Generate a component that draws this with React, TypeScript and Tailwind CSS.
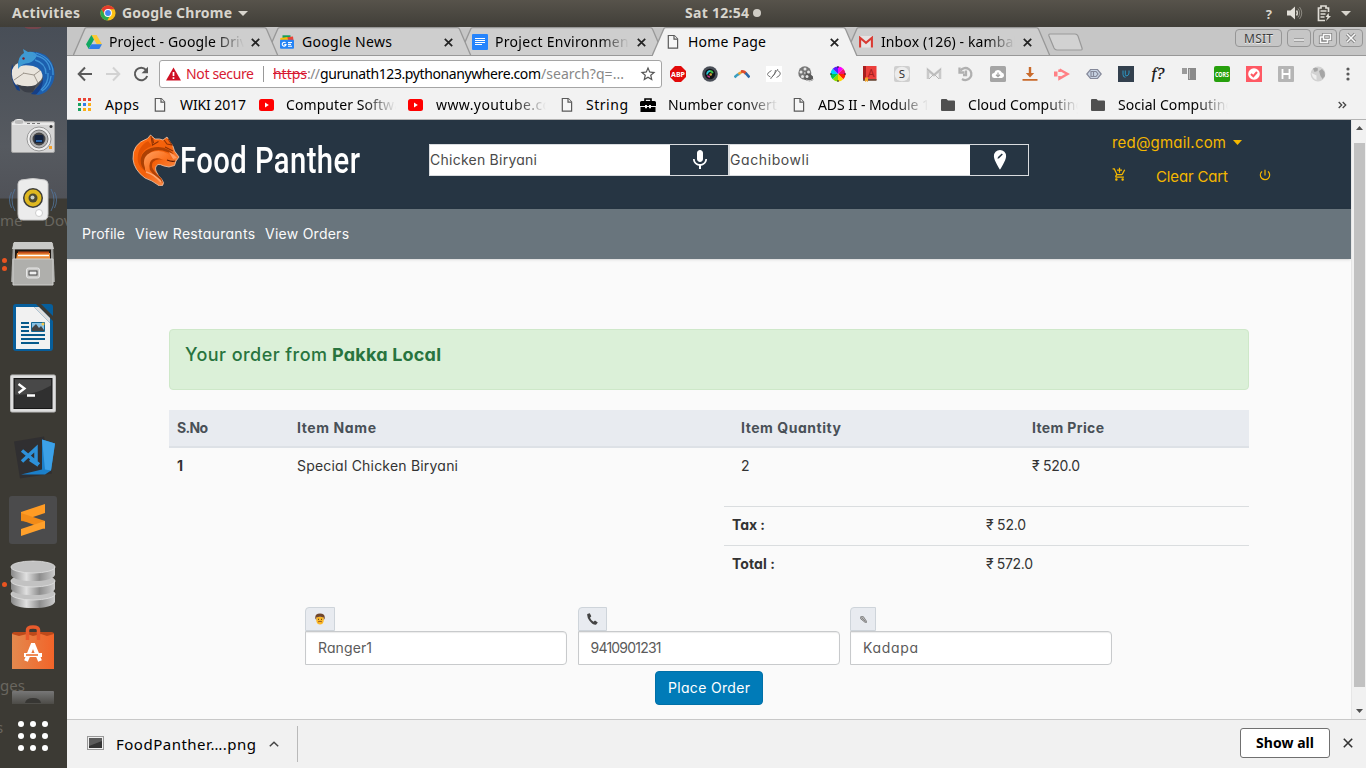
import { useLayoutEffect, useRef, useState, type ReactNode } from "react";
import { MdAddShoppingCart, MdMic, MdPowerSettingsNew, MdStarBorder } from "react-icons/md";

/** Text set to an exact advance width by evenly adjusting its letter spacing. */
function Fit({ w, className = "", children }: { w: number; className?: string; children: string }) {
  const ref = useRef<HTMLSpanElement>(null);
  const [gap, setGap] = useState(0);
  useLayoutEffect(() => {
    const el = ref.current;
    if (!el) return;
    el.style.letterSpacing = "0px";
    const natural = el.getBoundingClientRect().width;
    const next = (w - natural) / Math.max(1, children.length - 1);
    el.style.letterSpacing = `${next}px`;
    setGap(next);
  }, [w, children]);
  return (
    <span ref={ref} className={`inline-block whitespace-pre ${className}`} style={{ letterSpacing: gap, marginRight: -gap }}>
      {children}
    </span>
  );
}

function PageIcon() {
  return (
    <svg width="12" height="16" viewBox="0 0 12 16" className="shrink-0" fill="#f6f6f6" stroke="#5a5a5a" strokeWidth="1.2">
      <path d="M1.3 1.5h6l3.3 3.4v9.3H1.3z" />
      <path d="M7 1.6v3.6h3.6" />
    </svg>
  );
}

function ChromeIcon() {
  return (
    <svg width="16" height="16" viewBox="0 0 16 16">
      <circle cx="8" cy="8" r="7.6" fill="#fbc116" />
      <path d="M1.4 4.2A7.6 7.6 0 0 1 14.6 4.3H8L5 9.7z" fill="#e33b2e" />
      <path d="M1.4 4.2 5 10.2l4.6 1.1-2.3 4.3A7.6 7.6 0 0 1 1.4 4.2z" fill="#2da94f" />
      <circle cx="8" cy="8" r="3.9" fill="#fff" />
      <circle cx="8" cy="8" r="2.9" fill="#4285f4" />
    </svg>
  );
}

function DriveIcon() {
  return (
    <svg width="16" height="14" viewBox="0 0 16 14">
      <path d="M5.4 0h5.2L16 9.2h-5.2z" fill="#fcc934" />
      <path d="M5.4 0 8 4.5 2.7 14 0 9.3z" fill="#11a861" />
      <path d="M5.3 9.2H16L13.3 14H2.7z" fill="#2f7de9" />
    </svg>
  );
}

function NewsIcon() {
  return (
    <svg width="14" height="14" viewBox="0 0 14 14">
      <path d="M2.5 .3h8V6h-8z" fill="#159e58" />
      <path d="M7 2.2l6-.8.7 5H7z" fill="#ea4335" />
      <path d="M.3 3l7-1 1 4H.3z" fill="#fbbc04" />
      <rect y="4.8" width="14" height="9" rx="1" fill="#2684f5" />
      <path d="M5.6 8a1.9 1.9 0 1 0 .4 1.6H4.3M8 7.5h4M8 9.4h3M8 11.2h4" stroke="#fff" strokeWidth="1.1" fill="none" />
    </svg>
  );
}

function DocsIcon() {
  return (
    <svg width="16" height="16" viewBox="0 0 16 16">
      <rect width="16" height="16" rx="1" fill="#2684fc" />
      <path d="M3 4.5h10M3 6.5h10M3 8.500h10M3 10.500h7" stroke="#fff" strokeWidth="1" />
    </svg>
  );
}

function GmailIcon() {
  return (
    <svg width="14" height="12" viewBox="0 0 14 12">
      <rect width="14" height="11.5" rx="1" fill="#e6e3e3" />
      <path d="M1.1 11.5V1.8L7 6.8l5.9-5v9.7" fill="none" stroke="#d93a32" strokeWidth="2.1" />
    </svg>
  );
}

const tabs = [
  { title: "Project - Google Driv", w: 138, clip: 135, fade: true, icon: <DriveIcon />, z: "z-40" },
  { title: "Google News", w: 90, clip: 135, fade: false, icon: <NewsIcon />, z: "z-30" },
  { title: "Project Environment", w: 139, clip: 134, fade: true, icon: <DocsIcon />, z: "z-20" },
  { title: "Home Page", w: 78, clip: 135, fade: false, icon: <PageIcon />, z: "z-50", active: true },
  { title: "Inbox (126) - kambal", w: 136, clip: 134, fade: true, icon: <GmailIcon />, z: "z-10" },
];

function TabStrip() {
  return (
    <div className="relative flex h-[29px] border-b border-[#989898] bg-[#c6c6c6] pl-1.5">
      {tabs.map((t) => (
        <div key={t.title} className={`relative flex h-[29px] w-[193px] shrink-0 items-center pl-[13px] ${t.z}`}>
          <svg className="absolute top-0 left-0" width="206" height="29" viewBox="0 0 206 29">
            <path d="M0 29 L11.500 2.500 Q12 .7 14 .7 H191 Q193 .7 193.700 2.500 L205 29" fill={t.active ? "#f2f2f2" : "#cecece"} stroke="#989898" strokeWidth="1.3" />
            {!t.active && <path d="M0 28.500H206" stroke="#989898" />}
          </svg>
          <span className="relative flex w-[23px] justify-center pr-2">
            <span className="flex w-4 shrink-0 justify-center">{t.icon}</span>
          </span>
          <span
            className={`relative h-6 overflow-hidden text-sm leading-6 ${t.fade ? "[mask-image:linear-gradient(to_right,#000_78%,transparent)]" : ""}`}
            style={{ width: t.clip }}
          >
            <Fit w={t.w}>{t.title}</Fit>
          </span>
          <svg className="absolute top-[11px] left-[178px]" width="9" height="9" viewBox="0 0 9 9" stroke="#222" strokeWidth="1.7">
            <path d="M.8.8l7.4 7.4M8.2.8.8 8.2" />
          </svg>
        </div>
      ))}
      <svg className="mt-[6px] ml-[9px]" width="38" height="19" viewBox="0 0 38 19">
        <path d="M3 1h25q2 0 3 2l4 12q.6 2-1 2H10q-2 0-3-2L2 3q-.7-2 1-2z" fill="#d2d2d2" stroke="#999" strokeWidth="1.2" />
      </svg>
      <div className="mt-0.5 mr-[3px] ml-auto flex gap-0.5">
        <div className="mr-[3px] flex h-[18px] w-[47px] items-center justify-center rounded-sm border border-[#969696] pt-px text-xs text-[#3d3d3d] [text-shadow:0_1px_0_#eee]">
          <Fit w={29}>MSIT</Fit>
        </div>
        {["M7 11h10", "M10.500 5.500h7v5h-7zM10 8H7.500v5.500h7v-2.500", "M8 5l8 8M16 5l-8 8"].map((d) => (
          <div key={d} className="flex h-[18px] w-6 items-center justify-center rounded-sm border border-[#969696]">
            <svg width="24" height="18" viewBox="0 0 24 18" fill="none" className="shrink-0">
              <path d={d} stroke="#858585" strokeWidth="3.2" />
              <path d={d} stroke="#fafafa" strokeWidth="1.5" />
            </svg>
          </div>
        ))}
      </div>
    </div>
  );
}

const extensions: ReactNode[] = [
  <g key="abp">
    <path d="M5 0h6l5 5v6l-5 5H5l-5-5V5z" fill="#e20a0a" />
    <text x="8" y="10.8" textAnchor="middle" fontSize="7.500" textLength="14" lengthAdjust="spacingAndGlyphs" fontWeight="bold" fill="#fff">ABP</text>
  </g>,
  <g key="lens">
    <circle cx="8" cy="8" r="7.8" fill="#4a4f58" />
    <circle cx="8" cy="8" r="5.2" fill="#101217" />
    <path d="M5.2 8.5A3 3 0 0 1 8 5" stroke="#29c7d6" strokeWidth="1.8" fill="none" />
    <path d="M8 5a3 3 0 0 1 2.800 2.200" stroke="#41c34c" strokeWidth="1.8" fill="none" />
    <path d="M5.4 9.500a3 3 0 0 0 2.600 1.500" stroke="#d13a8e" strokeWidth="1.4" fill="none" />
    <circle cx="8.700" cy="8.500" r="1.300" fill="#d8a73a" />
  </g>,
  <g key="arc" fill="none" strokeWidth="2.600">
    <path d="M.5 11.500Q3 8.500 6 7.500" stroke="#3b9fc0" />
    <path d="M4.500 8.200Q6.500 6 8.500 6" stroke="#f0a030" />
    <path d="M7 5.500Q10.500 5 12 8" stroke="#dd4b2b" />
    <path d="M11.500 6.800 15.500 11.500" stroke="#2b68a8" />
  </g>,
  <g key="code">
    <rect width="16" height="16" fill="#fff" />
    <path d="M5.500 4.500Q1 7 1.500 8.500T4.500 11M11.500 4.500Q14.800 6 14.300 8T10.500 11.500M4.500 13 12 3M6 11Q9.500 9 9.500 4" stroke="#666" strokeWidth=".9" fill="none" />
  </g>,
  <g key="reel">
    <ellipse cx="6.800" cy="7" rx="6.500" ry="6.800" fill="#777" />
    <path d="M9 5l6 5.500V14q-4 3-9-1z" fill="#5a5a5a" />
    <path d="M8 14q4 2 8-1" stroke="#ccc" fill="none" />
    <g fill="#e5e5e5">
      <circle cx="7" cy="3" r="1.5" /><circle cx="3" cy="6" r="1.5" /><circle cx="10.5" cy="6" r="1.5" /><circle cx="4.500" cy="10.500" r="1.5" /><circle cx="9" cy="10.500" r="1.500" /><circle cx="6.800" cy="7" r=".8" />
    </g>
  </g>,
  <g key="wheel">
    <path d="M8 8V.5a7.500 7.500 0 0 1 5.300 2.200z" fill="#f0f" />
    <path d="M8 8l5.300-5.300A7.500 7.500 0 0 1 15.500 8z" fill="#f0146e" />
    <path d="M8 8h7.500a7.500 7.500 0 0 1-2.200 5.300z" fill="#ff2200" />
    <path d="M8 8l5.300 5.300A7.500 7.500 0 0 1 8 15.500z" fill="#ffd500" />
    <path d="M8 8v7.500a7.500 7.500 0 0 1-5.300-2.200z" fill="#8be000" />
    <path d="M8 8l-5.300 5.300A7.500 7.500 0 0 1 .5 8z" fill="#00c853" />
    <path d="M8 8H.5a7.500 7.500 0 0 1 2.200-5.300z" fill="#00cfff" />
    <path d="M8 8L2.700 2.700A7.500 7.500 0 0 1 8 .5z" fill="#5a1bff" />
    <path d="M8 0v2M8 14v2M0 8h2M14 8h2" stroke="#222" />
  </g>,
  <g key="dict">
    <path d="M1 0h13.5v14H1z" fill="#ec3f3c" />
    <path d="M1 0h3v14H1z" fill="#a81e1e" />
    <path d="M1 13h13.500v1.800H1z" fill="#6b4a38" />
    <path d="M3 11.500h3V16l-1.500-1L3 16z" fill="#f2a428" />
    <text x="9.200" y="11" textAnchor="middle" fontSize="10.500" fill="#a81e1e">A</text>
  </g>,
  <g key="s">
    <rect width="16" height="16" rx="2" fill="#cfcfcf" />
    <circle cx="8" cy="8" r="7.300" fill="#ececec" />
    <text x="8" y="12" textAnchor="middle" fontSize="11.500" fill="#333">S</text>
  </g>,
  <g key="mail" fill="none">
    <path d="M2 13V4l6 5 6-5v9" stroke="#c9c9c9" strokeWidth="2.6" />
    <path d="M1 3l7 6 7-6M3 13l4-4M13 13 9 9" stroke="#b5b5b5" />
  </g>,
  <g key="history" fill="none" stroke="#b0b0b0" strokeWidth="2.3">
    <path d="M2.500 4.500A6 6 0 1 1 4 13M8 4.500V9H5" />
    <path d="M1.500 1.500v5h5" />
  </g>,
  <g key="cloud">
    <rect width="16" height="16" rx="1.5" fill="#a5a5a5" />
    <path d="M4.500 12a2.500 2.500 0 0 1-.3-5 4 4 0 0 1 7.600-.5 2.800 2.800 0 0 1 0 5.500z" fill="#fff" />
    <path d="M8 6.500v4M6 8.700l2 2 2-2" stroke="#a5a5a5" fill="none" strokeWidth="1.300" />
  </g>,
  <g key="dl" fill="#c96a2b">
    <path d="M6.800 1h2.400v6h3L8 11.500 3.800 7h3zM.5 13h15v1.800H.5z" />
  </g>,
  <g key="tri" fill="none" stroke="#ff8085" strokeWidth="2.500">
    <path d="M5.500 3.500 13.500 8 5.500 12.500V10M5.500 6V3.500" />
    <path d="M0 5.500h3.500v5H0z" fill="#ff8085" stroke="none" />
  </g>,
  <g key="hex" fill="none" stroke="#85899a" strokeWidth="1.200">
    <path d="M4.500 3.500h7L15.200 8l-3.700 4.500h-7L.8 8z" fill="#c8d4e4" />
    <path d="M5 5.500h5L12 8l-2 2.500H5zM7.500 6v4" />
  </g>,
  <g key="u">
    <rect width="16" height="16" fill="#33404e" />
    <path d="M5 4.500v4q0 2.800 2.500 2.800M7.300 4.500v3.800q0 2 1.700 1.500t2-2.800V4.500" stroke="#2b9fd0" strokeWidth=".9" fill="none" />
  </g>,
  <text key="f" x="8" y="13" textAnchor="middle" fontSize="17" fill="#111" stroke="#111" strokeWidth=".3" className="font-['Liberation_Serif',serif] italic">f?</text>,
  <g key="cols">
    <path d="M0 2h5v6H0z" fill="#9a9a9a" />
    <path d="M6 2h8v12H6z" fill="#8a8a8a" />
    <path d="M7.500 3v10" stroke="#bbb" />
  </g>,
  <g key="cors">
    <rect width="16" height="16" rx="2" fill="#27a00d" />
    <text x="8" y="10.800" textAnchor="middle" fontSize="7.500" textLength="14" lengthAdjust="spacingAndGlyphs" fontWeight="bold" fill="#fff">CORS</text>
  </g>,
  <g key="check">
    <rect width="16" height="16" fill="#ff5964" />
    <circle cx="8" cy="8" r="5.800" fill="#fff" />
    <path d="M5 8l2.300 2.200L11 6" stroke="#ff5964" strokeWidth="2" fill="none" />
  </g>,
  <g key="h">
    <rect width="16" height="16" rx="1" fill="#b5b5b5" />
    <path d="M4.500 3v10M11.500 3v10M4.500 8h7" stroke="#fff" strokeWidth="1.8" />
  </g>,
  <g key="globe">
    <circle cx="8" cy="8" r="7.4" fill="#d2d2d2" />
    <path d="M3 2.500Q6 1 8 2.500L7.500 5 4.500 6zM9 5l3-2 2.500 3 .5 4-2.500 3-2-3z" fill="#a5a5a5" />
    <path d="M1.500 7l5 2.500L6.500 14Q2 12 1.500 7z" fill="#efefef" />
  </g>,
];

function Toolbar() {
  return (
    <div className="flex h-9 items-center bg-[#f2f2f2] pl-2.5">
      <svg width="16" height="16" viewBox="0 0 16 16" fill="none" stroke="#5a5a5a" strokeWidth="2">
        <path d="M15 8H2M8 1.500 1.700 8 8 14.500" />
      </svg>
      <svg className="ml-3" width="16" height="16" viewBox="0 0 16 16" fill="none" stroke="#d2d2d2" strokeWidth="2">
        <path d="M1 8h13M8 1.500 14.300 8 8 14.500" />
      </svg>
      <svg className="ml-3" width="16" height="16" viewBox="0 0 16 16">
        <path d="M13 3.800A6.300 6.300 0 1 0 14.200 10" fill="none" stroke="#5a5a5a" strokeWidth="2" />
        <path d="M15 .8v6.500H8.600z" fill="#5a5a5a" />
      </svg>
      <div className="ml-[10px] flex h-7 w-[503px] shrink-0 items-center rounded-[3px] border border-[#a5a5a5] bg-white pl-1.5 text-sm">
        <svg width="15" height="14" viewBox="0 0 15 14">
          <path d="M7.500.5 15 13.500H0z" fill="#cf1124" />
          <path d="M7.500 5v4M7.500 10.200v1.800" stroke="#fff" strokeWidth="1.7" />
        </svg>
        <Fit w={68} className="ml-[5px] text-[#d71a32]">Not secure</Fit>
        <span className="mx-[9px] h-4 w-px bg-[#999]" />
        <Fit w={34} className="text-[#d71a32] line-through">https</Fit>
        <Fit w={13} className="text-[#888]">://</Fit>
        <Fit w={221} className="text-black">gurunath123.pythonanywhere.com</Fit>
        <Fit w={83} className="text-[#888]">/search?q=...</Fit>
        <MdStarBorder className="mr-1 ml-auto size-[18px] text-[#555]" />
      </div>
      <div className="ml-2 flex gap-4">
        {extensions.map((icon, i) => (
          <svg key={i} width="16" height="16" viewBox="0 0 16 16" className="shrink-0">{icon}</svg>
        ))}
        <svg className="ml-1" width="4" height="16" viewBox="0 0 4 16" fill="#5a5a5a">
          <circle cx="2" cy="3" r="1.600" /><circle cx="2" cy="8" r="1.600" /><circle cx="2" cy="13" r="1.600" />
        </svg>
      </div>
    </div>
  );
}

function YouTube() {
  return (
    <svg width="15" height="12" viewBox="0 0 15 12">
      <rect width="15" height="12" rx="2.5" fill="#f00" />
      <path d="M6 3.500v5L9.800 6z" fill="#fff" />
    </svg>
  );
}

function Folder() {
  return (
    <svg width="14" height="12" viewBox="0 0 14 12" fill="#505050">
      <path d="M1 0h4.500L7 1.600h6q1 0 1 1V11q0 1-1 1H1q-1 0-1-1V1q0-1 1-1z" />
    </svg>
  );
}

function Briefcase() {
  return (
    <svg width="16" height="14" viewBox="0 0 16 14">
      <path d="M5 3V1h6v2" fill="none" stroke="#000" strokeWidth="1.6" />
      <path d="M1.500 3h13Q16 3 16 4.500V8h-5V7H9v1H7V7H5v1H0V4.500Q0 3 1.500 3zM.5 9H5v1.300h2V9h2v1.300h2V9h4.500v5H.5z" />
    </svg>
  );
}

const bookmarks = [
  { icon: <PageIcon />, cell: "w-[26px]", title: "WIKI 2017", w: 66, box: "w-[79px]", fade: false },
  { icon: <YouTube />, cell: "w-[27px]", title: "Computer Softwa", w: 116, box: "w-[122px]", fade: true },
  { icon: <YouTube />, cell: "w-[28px]", title: "www.youtube.co", w: 115, box: "w-[125px]", fade: true },
  { icon: <PageIcon />, cell: "w-[25px]", title: "String", w: 42, box: "w-[54px]", fade: false },
  { icon: <Briefcase />, cell: "w-[28px]", title: "Number convert", w: 109, box: "w-[125px]", fade: true },
  { icon: <PageIcon />, cell: "w-[25px]", title: "ADS II - Module 1", w: 112, box: "w-[123px]", fade: true },
  { icon: <Folder />, cell: "w-[27px]", title: "Cloud Computing", w: 116, box: "w-[123px]", fade: true },
  { icon: <Folder />, cell: "w-[27px]", title: "Social Computing", w: 116, box: "w-[120px]", fade: true },
];

function Bookmarks() {
  const colors = ["bg-[#ea4335]", "bg-[#ea4335]", "bg-[#ea4335]", "bg-[#1aa260]", "bg-[#2f7de9]", "bg-[#fbae17]", "bg-[#1aa260]", "bg-[#fbae17]", "bg-[#fbae17]"];
  return (
    <div className="flex h-7 items-center border-b border-[#b4b4b4] bg-[#f2f2f2] pb-0.5 pl-[11px] text-sm">
      <div className="grid shrink-0 grid-cols-3 gap-[2px]">
        {colors.map((c, i) => <span key={i} className={`size-[3px] ${c}`} />)}
      </div>
      <div className="ml-[14px] w-[49px] shrink-0"><Fit w={34}>Apps</Fit></div>
      {bookmarks.map((b) => (
        <div key={b.title} className="flex shrink-0 items-center">
          <span className={`${b.cell} flex shrink-0`}>{b.icon}</span>
          <span className={`${b.box} shrink-0`}>
            <span className={`block h-6 leading-6 ${b.fade ? "w-[110px] overflow-hidden [mask-image:linear-gradient(to_right,#000_70%,transparent)]" : ""}`}>
              <Fit w={b.w}>{b.title}</Fit>
            </span>
          </span>
        </div>
      ))}
      <svg className="mr-[19px] ml-auto" width="9" height="8" viewBox="0 0 9 8" fill="none" stroke="#444" strokeWidth="1.300">
        <path d="M.7 1l3 3-3 3M4.700 1l3 3-3 3" />
      </svg>
    </div>
  );
}

function PantherLogo() {
  return (
    <svg width="48" height="52" viewBox="0 0 48 52">
      <defs>
        <linearGradient id="fur" x1="0" y1="0" x2="1" y2="1">
          <stop offset="0" stopColor="#ff6a10" /><stop offset=".5" stopColor="#f4600a" /><stop offset="1" stopColor="#ff9f63" />
        </linearGradient>
        <linearGradient id="neck" x1="0" y1="0" x2="1" y2="1">
          <stop offset="0" stopColor="#ffa061" /><stop offset=".5" stopColor="#fb7220" /><stop offset="1" stopColor="#d94b02" />
        </linearGradient>
      </defs>
      <path d="M18.500 1l4.500 4q5-.5 8 1l4-3 3 5q3.500 3.500 4.500 9l4.500 6-3 4-1.500 4.500-5.500 1.500-5-1q-4-2-6-1.500-3.500 2-2 6.500 2 5 5.500 8 3.500 4 1 6.500l-3 .5q-8-6-14.500-8Q2 36 1 25 0 10 15.500 4.500z" fill="url(#fur)" stroke="#eec9b0" strokeWidth=".8" />
      <path d="M6 28Q4 14 16 7l4 5q-9 3-11 10-1 9 4 15-5-3-7-9z" fill="#e25204" />
      <path d="M9 30q-2-12 10-16 10-3 18 2l5 4-7-2q-9-4-16 0-8 5-4 17l3 5q-7-3-9-10z" fill="#ad4003" />
      <path d="M13 34Q9 22 20 18q9-3 16 2l6 5-9 1q-9-4-14 2-4 6 2 14-6-2-8-6z" fill="url(#neck)" />
      <path d="M31 26q-6-2-10 2-3 4 2 10l6 6q2 3 1.500 5.500l-2-4Q22 42 18 36q-2-8 3-11 5-2 10 1z" fill="#b34205" />
      <path d="M14 38q8 2 15 10" fill="none" stroke="#ffa873" strokeWidth="1.400" />
      <path d="M19 2l1.500 9 6-3.500M20.500 4l1 5M32 6l3 4 5 1-4-6M33 13l8 4" fill="none" stroke="#8f3204" strokeWidth="1.100" />
      <path d="M37 18l5 3 3 3-4 1z" fill="#ff9d64" />
      <path d="M35 26q5 2 8 1" stroke="#5c1900" strokeWidth="1.300" fill="none" />
    </svg>
  );
}

function SiteHeader() {
  return (
    <header className="flex h-[89px] shrink-0 bg-[#263543]">
      <div className="flex w-[362px] shrink-0 pt-[14px] pl-[65px]">
        <PantherLogo />
        <div className="mt-0.5 w-44">
          <span className="block origin-left scale-x-[.79] font-[Roboto,sans-serif] text-[37px] leading-[50px] font-medium tracking-[0.55px] whitespace-nowrap text-white">
            Food Panther
          </span>
        </div>
      </div>
      <div className="mt-6 flex h-8 w-[600px] shrink-0 border border-[#d9dcdf] text-[#4a4a4a]">
        <div className="flex w-60 items-center bg-white"><Fit w={107}>Chicken Biryani</Fit></div>
        <div className="flex w-[58px] items-center justify-center text-white"><MdMic className="ml-0.5 size-6" /></div>
        <div className="flex w-[242px] items-center border-l-2 border-[#d9dcdf] bg-white"><Fit w={79}>Gachibowli</Fit></div>
        <div className="flex flex-1 items-center justify-center">
          <svg className="ml-0.5" width="14" height="22" viewBox="0 0 14 22">
            <path d="M7 1a6.1 6.1 0 0 0-6.1 6.300C.9 11.500 7 20.800 7 20.800s6.100-9.300 6.100-13.500A6.100 6.100 0 0 0 7 1z" fill="#fff" />
            <path d="M4.500 9.800 5 8l3.800-3.600 1 1-3.700 3.800z" fill="#263543" />
          </svg>
        </div>
      </div>
      <div className="ml-[83px] pt-[14px] text-[#f5b800]">
        <div className="flex h-[18px] items-center text-[15px]">
          <Fit w={114}>red@gmail.com</Fit>
          <svg className="mb-0.5 ml-[7px]" width="9" height="5" viewBox="0 0 9 5" fill="currentColor"><path d="M0 0h9L4.500 5z" /></svg>
        </div>
        <div className="mt-[15px] flex h-5 items-center">
          <MdAddShoppingCart className="mb-1.5 size-[15px]" />
          <Fit w={72} className="ml-[29px] text-[15px]">Clear Cart</Fit>
          <MdPowerSettingsNew className="mb-1 ml-[30px] size-[14px]" />
        </div>
      </div>
    </header>
  );
}

function Field({ icon, value, w, width }: { icon: ReactNode; value: string; w: number; width: string }) {
  return (
    <div>
      <div className={`${width} flex h-6 items-center justify-center rounded-tl-sm border border-[#ced4da] bg-[#e8ebf0]`}>{icon}</div>
      <div className="flex h-[34px] items-center rounded-r border border-[#c8cacc] bg-white pl-3 shadow-[inset_0_1px_1px_rgba(0,0,0,.08)]">
        <Fit w={w}>{value}</Fit>
      </div>
    </div>
  );
}

function OrderPage() {
  return (
    <main className="flex w-[1284px] shrink-0 flex-col overflow-hidden bg-[#fafafa] font-[Inter,sans-serif] text-sm text-[#333] [font-feature-settings:'cv11']">
      <SiteHeader />
      <nav className="flex h-[50px] shrink-0 items-center gap-[10px] bg-[#69757d] pl-[15px] text-[#fafafa] shadow">
        <Fit w={43}>Profile</Fit>
        <Fit w={120}>View Restaurants</Fit>
        <Fit w={84}>View Orders</Fit>
      </nav>
      <div className="ml-[102px] w-[1080px] pt-[70px]">
        <div className="h-[61px] rounded border border-[#cee8c9] bg-[#dbf0d8] pt-[11px] pl-[15px] text-lg leading-7 text-[#28743e]">
          <Fit w={142} className="font-medium">Your order from</Fit>
          <Fit w={109} className="ml-[5px] font-bold">Pakka Local</Fit>
        </div>
        <div className="mt-5 grid h-[38px] grid-cols-[120px_444px_291px_1fr] items-center border-b-2 border-[#dde1e6] bg-[#e8ebf0] font-bold text-[#495057] *:pl-2">
          <div><Fit w={31}>S.No</Fit></div>
          <div><Fit w={79}>Item Name</Fit></div>
          <div><Fit w={100}>Item Quantity</Fit></div>
          <div><Fit w={72}>Item Price</Fit></div>
        </div>
        <div className="grid h-[37px] grid-cols-[120px_444px_291px_1fr] items-center pb-px *:pl-2">
          <div className="font-bold">1</div>
          <div><Fit w={161}>Special Chicken Biryani</Fit></div>
          <div>2</div>
          <div><Fit w={48}>₹ 520.0</Fit></div>
        </div>
        <div className="mt-[21px] ml-[555px]">
          <div className="grid h-[39px] grid-cols-[254px_1fr] items-center border-t border-[#dadddf] pb-0.5 *:pl-2">
            <div className="font-bold"><Fit w={33}>Tax :</Fit></div>
            <div><Fit w={40}>₹ 52.0</Fit></div>
          </div>
          <div className="grid h-[39px] grid-cols-[254px_1fr] items-center border-t border-[#dadddf] pb-0.5 *:pl-2">
            <div className="font-bold"><Fit w={43}>Total :</Fit></div>
            <div><Fit w={47}>₹ 572.0</Fit></div>
          </div>
        </div>
        <div className="mt-[23px] ml-[136px] grid grid-cols-[262px_262px_262px] gap-x-[10.5px] text-[#5b5b5b]">
          <Field width="w-[30px]" value="Ranger1" w={54} icon={
            <svg width="10" height="12" viewBox="0 0 10 12">
              <path d="M1.300 4h7.400v4q-.7 3.500-3.700 3.500T1.300 8z" fill="#fcb827" />
              <path d="M.3 5.500Q-.3.5 5 .5t4.700 5L8.800 7V4.500Q5 3 1.200 4.500V7z" fill="#70462c" />
              <path d="M3 6.300h1M6 6.300h1" stroke="#4a3520" />
              <path d="M3 8.800q2-1 4 0" stroke="#8a5526" fill="none" strokeWidth=".9" />
            </svg>} />
          <Field width="w-[29px]" value="9410901231" w={71} icon={
            <svg width="11" height="12" viewBox="0 0 11 12">
              <path d="M.3 1 2.800.2 4.300 3.200 3 4.700Q3.800 7 6.500 8.700L8 7.600l2.800 2L9 11.700Q5.500 12 2.300 7.500-.3 3.500.3 1z" fill="#444" />
            </svg>} />
          <Field width="w-[26px]" value="Kadapa" w={55} icon={
            <svg width="7" height="7" viewBox="0 0 8 8">
              <path d="M.8.8l3-.1L7.200 5.600l.2 1.800-1.800-.3L.8 3.300z" fill="#bbb" stroke="#666" strokeWidth=".8" />
              <path d="M2 2l4 4" stroke="#666" strokeWidth=".7" />
            </svg>} />
        </div>
        <button className="mt-1.5 ml-[486px] block h-[34px] w-[108px] rounded border border-[#0070a8] bg-[#007bb8] text-white">
          <Fit w={82}>Place Order</Fit>
        </button>
      </div>
    </main>
  );
}

const dockIcons: { icon: ReactNode; dots: number }[] = [
  {
    dots: 0,
    icon: (
      <g>
        <path d="M3 16Q0 30 8 42l3 1-2-10zM44 17q4 14-6 24-8 7-16 5l8-9z" fill="#163f86" />
        <path d="M3 22q3-7 9-8l20 4q4 8 0 14l-9 8-16-3Q2 31 3 22z" fill="#e9e4dc" />
        <path d="M14 25l11 2 12-9M5 32l10-7M25 27l4 8" stroke="#9d968c" fill="none" />
        <path d="M7 36q10 4 20 1l-3 7q-8 2-12-3z" fill="#3b3f48" />
        <path d="M9 15Q12 5 20 4q16-2 23 11 7 16-5 28-5 4-11 4 7-7 7-15 0-12-10-14Q12 16 9 20z" fill="#1d5fae" />
        <path d="M9 18Q9 8 15 5l-1-4 5 3q6-1 9 3-2 6-8 8-7 0-11 6z" fill="#3e9ad3" />
        <path d="M24 7q15 2 17 15M27 5q18 6 17 22M26 12q11 3 11 14M39 25q1 10-7 17M42 28q-1 10-9 15" stroke="#3f93d6" fill="none" strokeWidth="1.300" />
        <circle cx="14.500" cy="10.500" r="1.200" fill="#7b1f2a" />
      </g>
    ),
  },
  {
    dots: 0,
    icon: (
      <g>
        <rect x="2.500" y="9.500" width="43" height="31" rx="1.500" fill="#d5d5d5" stroke="#a2a2a2" />
        <path d="M3 12h42" stroke="#fff" /><ellipse cx="10" cy="10" rx="5" ry="2.500" fill="#bbb" stroke="#eee" />
        <path d="M18 11.500h15" stroke="#777" strokeDasharray="3 2" />
        <circle cx="30" cy="27" r="12" fill="#efefef" stroke="#999" />
        <circle cx="30" cy="27" r="9" fill="#b5b5b5" stroke="#777" />
        <circle cx="30" cy="27" r="6.500" fill="#444" />
        <rect x="25.500" y="23" width="9" height="8" rx="1.500" fill="#14223c" /><path d="M27 28h6v2h-6z" fill="#2b67ab" />
        <circle cx="42" cy="14.500" r="1.500" fill="#333" /><path d="M40 34h3v3h-3z" fill="#f5a22c" />
      </g>
    ),
  },
  {
    dots: 0,
    icon: (
      <g>
        <path d="M6 13q-6 11 0 22M42 13q6 11 0 22M2.500 16q-4 8 0 16M45.500 16q4 8 0 16" stroke="#51759e" fill="none" opacity=".8" />
        <path d="M12 4q12-3 24 0 3 1 3 4v30q0 6-5 6H14q-5 0-5-6V8q0-3 3-4z" fill="#ececec" stroke="#c8c8c8" />
        <circle cx="24" cy="22" r="10" fill="#3c3c39" /><circle cx="24" cy="22" r="8.500" fill="#dfb820" />
        <circle cx="24" cy="22" r="4.500" fill="#4c4a33" /><circle cx="23.500" cy="21.500" r="2" fill="#c9cfc8" />
        <circle cx="30" cy="37" r="3.500" fill="#fff" stroke="#ccc" />
      </g>
    ),
  },
  {
    dots: 2,
    icon: (
      <g>
        <path d="M4 3h40l2 39H2z" fill="#9f9f9c" />
        <path d="M5 2h38l2 7H3z" fill="#c9c9c7" />
        <path d="M6 9.500h36V24H6z" fill="#1f1813" /><path d="M8 13h33v7H7z" fill="#ee8d3a" />
        <path d="M9 12.500h31" stroke="#c24d19" strokeWidth="2" /><path d="M9 15.500h31" stroke="#fff" strokeWidth="1.400" />
        <path d="M4 19h40v26H4z" fill="#afafac" stroke="#cfcfcd" />
        <rect x="17.500" y="28" width="13" height="10" rx="2" fill="#c9c9c7" stroke="#e6e6e6" /><rect x="20" y="31" width="8" height="4" fill="#eee" stroke="#444" />
      </g>
    ),
  },
  {
    dots: 0,
    icon: (
      <g>
        <path d="M7 0h20l17 17v27q0 3-3 3H7q-3 0-3-3V3q0-3 3-3z" fill="#075e9b" /><path d="M32 0h9q3 0 3 3v9z" fill="#075e9b" />
        <path d="M7 3h18l16 16v26H7z" fill="#f1f1f1" /><path d="M25 3l16 16V14L30 3z" fill="#ddd" />
        <path d="M12 19h8M12 23h8M12 27h8M12 31h24M12 35h24M12 39h18" stroke="#075a8b" strokeWidth="2" />
        <path d="M22.500 18.500h13v9h-13z" fill="#88c1e4" stroke="#126694" /><path d="M23 27v-3l4-4 3 4 2-2 3 4v1z" fill="#444" /><circle cx="34" cy="20" r="1.500" fill="#f7c84a" />
      </g>
    ),
  },
  {
    dots: 0,
    icon: (
      <g transform="translate(0 1.500)">
        <rect x="1.500" y="5.500" width="45" height="37" rx="1.500" fill="#dedede" stroke="#bcbcbc" />
        <rect x="5" y="9" width="38" height="30" fill="#303030" stroke="#171717" /><path d="M6 10h36v6Q23 27 6 25z" fill="#585858" opacity=".6" />
        <path d="M9.500 14.500l6 4.500-6 4.500M18 26h8" fill="none" stroke="#fff" strokeWidth="2.300" />
      </g>
    ),
  },
  {
    dots: 0,
    icon: (
      <g transform="translate(0 2.500)">
        <path d="M5 7 35 2l8 37-32 5z" fill="#302f31" /><path d="m33 5 13 4-4 27-6 4H12l21-5z" fill="#1b7fc9" />
        <path d="M33 5 46 9l-4 27-6-1z" fill="#3ca1e8" />
        <path d="M13 16l17 14M13 27l14-13v15l-6-4" fill="none" stroke="#2d91da" strokeWidth="3.500" />
      </g>
    ),
  },
  {
    dots: 0,
    icon: (
      <g>
        <rect width="48" height="48" rx="3" fill="#4b4b4c" /><path d="M12 16 36 8v9l-24 8z" fill="#ff9b24" />
        <path d="M12 22l24 3v3L12 25z" fill="#e07f12" /><path d="M12 17v7l24 9v-8z" fill="#f28b18" /><path d="M12 33l24-8v7l-24 8z" fill="#ffa02b" />
      </g>
    ),
  },
  {
    dots: 1,
    icon: (
      <g>
        {[34, 21, 7].map((y) => (
          <g key={y}>
            <path d={`M2 ${y}v8q3 6 22 6t22-6v-8z`} fill="url(#metal)" />
            <ellipse cx="24" cy={y} rx="22" ry="6" fill="#c2c2c2" stroke="#e2e2e2" strokeWidth=".8" />
          </g>
        ))}
      </g>
    ),
  },
  {
    dots: 0,
    icon: (
      <g>
        <path d="M3 9 5 8h38l2 1v5H3z" fill="#bd491a" /><path d="M3 10l7 2 8-2 6 2 8-2 6 2 7-2v35H3z" fill="url(#bag)" />
        <path d="M18.500 16V6q0-3 5.500-3t5.500 3v10" fill="none" stroke="#e85b2c" strokeWidth="3.500" />
        <path d="M17 37 23.500 21h1L31 37" fill="none" stroke="#fff" strokeWidth="4" /><path d="M15 31h18" stroke="#fff" strokeWidth="4" /><path d="M17 31h12" stroke="#ed7130" strokeWidth="1.600" />
      </g>
    ),
  },
];

function Dock() {
  return (
    <aside className="relative flex h-[741px] w-[67px] shrink-0 flex-col overflow-hidden bg-[linear-gradient(#484e57_0,#565a60_120px,#505258_171px,#3c3a34_172px)] pt-[13px] text-[15px] text-[#69665f]">
      <span className="absolute -top-[10px] left-[23px] h-3 w-5 rounded-full bg-[#75454c]" />
      <span className="absolute top-[182px] left-0">me</span>
      <span className="absolute top-[182px] left-11">Dov</span>
      <span className="absolute top-[647px] left-0">ges</span>
      <span className="absolute top-[689px] -left-1">s</span>
      <svg width="0" height="0" className="absolute">
        <defs>
          <linearGradient id="metal"><stop offset="0" stopColor="#888" /><stop offset=".35" stopColor="#e0e0e0" /><stop offset=".65" stopColor="#8d8d8d" /><stop offset="1" stopColor="#ccc" /></linearGradient>
          <linearGradient id="bag" x2="1"><stop offset="0" stopColor="#e3894e" /><stop offset="1" stopColor="#f26429" /></linearGradient>
          <linearGradient id="fade" x2="0" y2="1"><stop offset="0" stopColor="#777" /><stop offset="1" stopColor="#3c3a34" /></linearGradient>
        </defs>
      </svg>
      {dockIcons.map(({ icon, dots }, i) => (
        <div key={i} className="relative flex h-16 shrink-0 items-center pl-[9px]">
          <span className="absolute left-[2px] flex flex-col gap-[3px]">
            {Array.from({ length: dots }, (_, d) => <span key={d} className="size-[5px] rounded-full bg-[#e95420]" />)}
          </span>
          <svg width="48" height="48" viewBox="0 0 48 48">{icon}</svg>
        </div>
      ))}
      <svg className="relative mt-[11px] ml-3 shrink-0" width="42" height="13" viewBox="0 0 42 13">
        <rect width="42" height="18" rx="1" fill="url(#fade)" /><path d="M13 12q1-5 8-5t8 5z" fill="#373633" />
      </svg>
      <div className="mt-[17px] ml-[18px] grid grid-cols-3 gap-1.5 self-start">
        {Array.from({ length: 9 }, (_, i) => <span key={i} className="size-1.5 rounded-full bg-white" />)}
      </div>
    </aside>
  );
}

function Scrollbar() {
  return (
    <div className="flex w-[15px] flex-col items-center border-l border-[#e6e6e6] bg-[#f1f1f1]">
      <svg width="15" height="23" viewBox="0 0 15 23"><path d="M4 10h7L7.500 6z" fill="#505050" /></svg>
      <div className="h-[544px] w-[11px] bg-[#c1c1c1]" />
      <svg className="mt-auto" width="15" height="18" viewBox="0 0 15 18"><path d="M4 8h7l-3.500 4z" fill="#505050" /></svg>
    </div>
  );
}

function Downloads() {
  return (
    <footer className="flex h-[49px] items-center border-t border-[#c8c8c8] bg-[#f1f1f1] pl-5">
      <svg className="mb-0.5" width="17" height="14" viewBox="0 0 17 14">
        <rect x=".5" y=".5" width="16" height="13" fill="#eee" stroke="#999" /><path d="M2 2h13v10H2z" fill="#333" /><path d="M2 2h13v3L2 10z" fill="#777" opacity=".6" />
      </svg>
      <Fit w={140} className="mt-px ml-3 text-[15px]">FoodPanther….png</Fit>
      <svg className="ml-[13px]" width="10" height="6" viewBox="0 0 10 6" fill="none" stroke="#444" strokeWidth="1.500"><path d="m.8 5.300 4.200-4 4.200 4" /></svg>
      <span className="ml-[18px] h-9 w-px bg-[#b9b9b9]" />
      <div className="mr-[13px] mb-0.5 ml-auto flex h-[30px] w-[90px] items-center justify-center rounded-[3px] border border-[#707070] bg-white text-sm font-bold">
        <Fit w={58}>Show all</Fit>
      </div>
      <svg className="mr-[13px] mb-0.5" width="10" height="10" viewBox="0 0 10 10" stroke="#333" strokeWidth="1.600"><path d="m.8.800 8.400 8.400M9.200.800.8 9.200" /></svg>
    </footer>
  );
}

export default function App() {
  return (
    <div className="h-[768px] w-[1366px] overflow-hidden bg-[#f2f2f2] font-['Noto_Sans',sans-serif] text-black">
      <div className="grid h-[27px] grid-cols-3 items-center bg-[linear-gradient(#57534b,#403e38)] pb-px text-sm font-bold text-[#d8d5cd]">
        <div className="flex items-center pl-3">
          <Fit w={68}>Activities</Fit>
          <span className="mr-1.5 ml-5"><ChromeIcon /></span>
          <Fit w={110}>Google Chrome</Fit>
          <svg className="ml-1.5" width="10" height="5" viewBox="0 0 10 5" fill="currentColor"><path d="M0 0h10L5 5z" /></svg>
        </div>
        <div className="flex items-center justify-center pl-20">
          <Fit w={64}>Sat 12:54</Fit>
          <span className="ml-1 size-2 rounded-full bg-[#d0cdc6]" />
        </div>
        <div className="flex items-center justify-end pr-[15px]">
          <span className="mt-0.5 mr-[14px] text-[13px]">?</span>
          <svg width="17" height="16" viewBox="0 0 16 16" fill="none" stroke="#d5d2ca" className="mr-0.5">
            <path d="M.5 5.500H4l4.500-4v13L4 10.500H.500z" fill="#e3e0d9" stroke="none" /><path d="M10 5.500q1.800 2.500 0 5" strokeWidth="1.500" />
            <path d="M11.500 3.500q3.300 4.500 0 9M13 2q4.500 6 0 12" stroke="#8e8b83" />
          </svg>
          <svg className="ml-3" width="14" height="17" viewBox="0 0 14 17" fill="none" stroke="#e0ddd6" strokeWidth="1.700">
            <path d="M8 15.500H1.500V3H4V1h5v2h2.500v4M3.500 6h6M3.500 9h5M3.500 12h4" /><path d="m11.500 8-3 4h2L9 16l5-5h-2z" fill="#e0ddd6" stroke="none" />
          </svg>
          <svg className="ml-[10px]" width="10" height="5" viewBox="0 0 10 5" fill="currentColor"><path d="M0 0h10L5 5z" /></svg>
        </div>
      </div>
      <div className="flex">
        <Dock />
        <div className="w-[1299px] shrink-0">
          <TabStrip />
          <Toolbar />
          <Bookmarks />
          <div className="flex h-[599px]">
            <OrderPage />
            <Scrollbar />
          </div>
          <Downloads />
        </div>
      </div>
    </div>
  );
}
